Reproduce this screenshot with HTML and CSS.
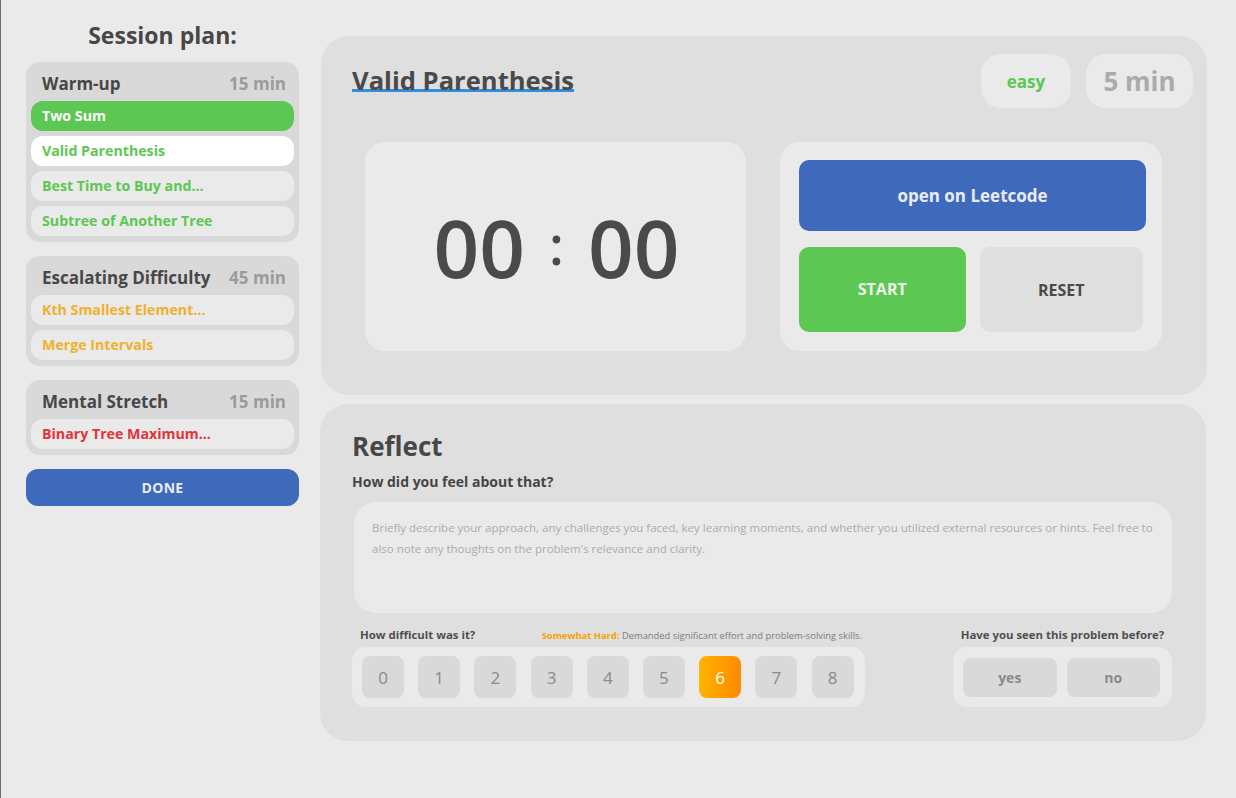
FILE: index.html
```html
<!DOCTYPE html>
<html lang="en">
<head>
<meta charset="utf-8">
<title>Session</title>
<link rel="stylesheet" href="styles.css">
</head>
<body>
<div class="page">
  <aside class="sidebar">
    <h2 class="side-title">Session plan:</h2>
    <section class="group">
      <div class="group-head"><span class="group-name">Warm-up</span><span class="group-min">15 min</span></div>
      <div class="item item-done">Two Sum</div>
      <div class="item item-current green">Valid Parenthesis</div>
      <div class="item green">Best Time to Buy and...</div>
      <div class="item green">Subtree of Another Tree</div>
    </section>
    <section class="group">
      <div class="group-head"><span class="group-name">Escalating Difficulty</span><span class="group-min">45 min</span></div>
      <div class="item orange">Kth Smallest Element...</div>
      <div class="item orange">Merge Intervals</div>
    </section>
    <section class="group">
      <div class="group-head"><span class="group-name">Mental Stretch</span><span class="group-min">15 min</span></div>
      <div class="item red">Binary Tree Maximum...</div>
    </section>
    <button class="done-btn">DONE</button>
  </aside>

  <main class="main">
    <section class="card problem">
      <header class="problem-head">
        <h1 class="problem-title">Valid Parenthesis</h1>
        <div class="badges">
          <div class="badge badge-easy">easy</div>
          <div class="badge badge-time">5 min</div>
        </div>
      </header>
      <div class="problem-body">
        <div class="timer">
          <span class="t-digits">00</span><span class="t-colon">:</span><span class="t-digits">00</span>
        </div>
        <div class="controls">
          <button class="btn btn-open">open on Leetcode</button>
          <button class="btn btn-start">START</button>
          <button class="btn btn-reset">RESET</button>
        </div>
      </div>
    </section>

    <section class="card reflect">
      <h2 class="reflect-title">Reflect</h2>
      <div class="question">How did you feel about that?</div>
      <div class="textbox">Briefly describe your approach, any challenges you faced, key learning moments, and whether you utilized external resources or hints. Feel free to also note any thoughts on the problem's relevance and clarity.</div>
      <div class="bottom-row">
        <div class="difficulty">
          <div class="diff-labels">
            <span class="small-label">How difficult was it?</span>
            <span class="diff-desc"><b class="diff-level">Somewhat Hard:</b> Demanded significant effort and problem-solving skills.</span>
          </div>
          <div class="diff-box">
            <div class="num">0</div>
            <div class="num">1</div>
            <div class="num">2</div>
            <div class="num">3</div>
            <div class="num">4</div>
            <div class="num">5</div>
            <div class="num num-active">6</div>
            <div class="num">7</div>
            <div class="num">8</div>
          </div>
        </div>
        <div class="seen">
          <div class="small-label seen-label">Have you seen this problem before?</div>
          <div class="seen-box">
            <div class="yn">yes</div>
            <div class="yn">no</div>
          </div>
        </div>
      </div>
    </section>
  </main>
</div>
</body>
</html>
```
FILE: styles.css
```css
* { box-sizing: border-box; }
html, body { margin: 0; padding: 0; }
body {
  background: #eaeaea;
  font-family: "Open Sans", "Liberation Sans", sans-serif;
  color: #4a4a4a;
}
.page {
  display: flex;
  align-items: flex-start;
  height: 798px;
  border-left: 1px solid #6e6e6e;
  padding-left: 25px;
}

/* Sidebar */
.sidebar {
  width: 273px;
  display: flex;
  flex-direction: column;
  gap: 14px;
  padding-top: 20px;
}
.side-title {
  margin: 0 0 -2px;
  text-align: center;
  font-size: 23px;
  line-height: 30px;
  font-weight: 700;
  color: #474747;
}
.group {
  background: #d9d9d9;
  border-radius: 14px;
  padding: 0 5px 6px;
  display: flex;
  flex-direction: column;
  gap: 5px;
}
.group-head {
  display: flex;
  justify-content: space-between;
  padding: 10px 8px 0 11px;
  height: 34px;
  line-height: 24px;
  font-size: 17px;
  font-weight: 700;
}
.group-name { color: #474747; }
.group-min { color: #9b9b9b; }
.item {
  height: 30px;
  line-height: 30px;
  border-radius: 12px;
  background: #eaeaea;
  padding-left: 11px;
  font-size: 14.2px;
  font-weight: 700;
  white-space: nowrap;
}
.item-done { background: #5cc752; color: #fff; }
.item-current { background: #ffffff; }
.green { color: #5cc752; }
.orange { color: #efb12e; }
.red { color: #e5333a; }
.done-btn {
  height: 37px;
  border: none;
  border-radius: 12px;
  background: #3f69bb;
  color: #e8ecf6;
  font-family: inherit;
  font-size: 14px;
  font-weight: 700;
  letter-spacing: 0.3px;
  padding-bottom: 2px;
}

/* Main */
.main {
  margin-left: 21px;
  margin-top: 36px;
  width: 886px;
  display: flex;
  flex-direction: column;
  gap: 9px;
}
.card {
  background: #dfdfdf;
  border-radius: 28px;
}
.problem {
  height: 359px;
  padding: 18px 14px 0 31px;
  margin-left: 1px;
  margin-right: -1px;
}
.problem-head {
  display: flex;
  justify-content: space-between;
  align-items: center;
  height: 54px;
}
.problem-title {
  margin: 0;
  font-size: 25.6px;
  font-weight: 700;
  line-height: 34px;
  color: #4a4a4a;
  text-decoration: underline;
  text-decoration-color: #2e8ee0;
  text-decoration-thickness: 3px;
  text-underline-offset: -1px;
  text-decoration-skip-ink: none;
}
.badges { display: flex; gap: 15px; }
.badge {
  height: 54px;
  border-radius: 20px;
  background: #eaeaea;
  display: flex;
  align-items: center;
  justify-content: center;
  font-weight: 700;
}
.badge-easy { width: 90px; color: #5cc752; font-size: 17px; }
.badge-time { width: 107px; color: #ababab; font-size: 26px; }

.problem-body {
  display: grid;
  grid-template-columns: 381px 382px;
  gap: 34px;
  margin: 34px 0 0 13px;
  height: 209px;
}
.timer {
  background: #eaeaea;
  border-radius: 20px;
  display: flex;
  align-items: center;
  justify-content: center;
  gap: 24px;
  color: #4a4a4a;
  padding-left: 2px;
}
.t-digits {
  font-size: 80px;
  font-weight: 600;
  line-height: 1;
}
.t-colon {
  font-size: 54px;
  font-weight: 600;
  line-height: 1;
  margin-top: -6px;
}
.controls {
  background: #eaeaea;
  border-radius: 20px;
  padding: 18px 16px 19px 19px;
  display: grid;
  grid-template-columns: 1fr 1fr;
  grid-template-rows: 71px 85px;
  column-gap: 14px;
  row-gap: 16px;
}
.btn {
  border: none;
  font-family: inherit;
  font-weight: 700;
  border-radius: 10px;
}
.btn-open {
  grid-column: 1 / 3;
  background: #3f69bb;
  color: #e9ecf5;
  font-size: 17px;
}
.btn-start {
  background: #5cc752;
  color: #eef5ec;
  font-size: 16px;
  padding-bottom: 2px;
}
.btn-reset {
  background: #dfdfdf;
  color: #4a4a4a;
  font-size: 16px;
  margin-right: 3px;
}

/* Reflect */
.reflect {
  height: 337px;
  padding: 24px 34px 0 32px;
}
.reflect-title {
  margin: 0;
  font-size: 26px;
  line-height: 36px;
  font-weight: 700;
  color: #474747;
}
.question {
  margin-top: 8px;
  font-size: 14px;
  line-height: 20px;
  font-weight: 700;
  color: #454545;
}
.textbox {
  margin: 10px 0 0 2px;
  height: 111px;
  background: #eaeaea;
  border-radius: 22px;
  padding: 15px 10px 0 18px;
  font-size: 11.5px;
  line-height: 21px;
  color: #ababab;
}
.bottom-row {
  display: flex;
  justify-content: space-between;
  margin-top: 14px;
}
.small-label {
  font-size: 11.4px;
  font-weight: 700;
  line-height: 16px;
  color: #4f4f4f;
}
.diff-labels {
  display: flex;
  justify-content: space-between;
  align-items: baseline;
  padding: 0 3px 0 8px;
  height: 20px;
}
.diff-desc {
  font-size: 9.4px;
  color: #7d7d7d;
}
.diff-level { color: #f5a300; font-weight: 700; }
.diff-box {
  width: 513px;
  height: 60px;
  background: #eaeaea;
  border-radius: 14px;
  padding: 9px 10px;
  display: flex;
  gap: 14.2px;
}
.num {
  width: 42px;
  height: 42px;
  border-radius: 8px;
  background: #d9d9d9;
  color: #8a8a8a;
  font-size: 17px;
  font-weight: 500;
  display: flex;
  align-items: center;
  justify-content: center;
}
.num-active {
  background: linear-gradient(90deg, #ffb300, #ff8a00);
  color: #ffffff;
}
.seen { width: 219px; }
.seen-label {
  text-align: center;
  height: 20px;
  white-space: nowrap;
}
.seen-box {
  height: 60px;
  background: #eaeaea;
  border-radius: 14px;
  padding: 11px 12px 10px 10px;
  display: flex;
  gap: 10px;
}
.yn {
  flex: 1;
  background: #d9d9d9;
  border-radius: 8px;
  color: #8a8a8a;
  font-size: 14px;
  font-weight: 700;
  display: flex;
  align-items: center;
  justify-content: center;
}
```
